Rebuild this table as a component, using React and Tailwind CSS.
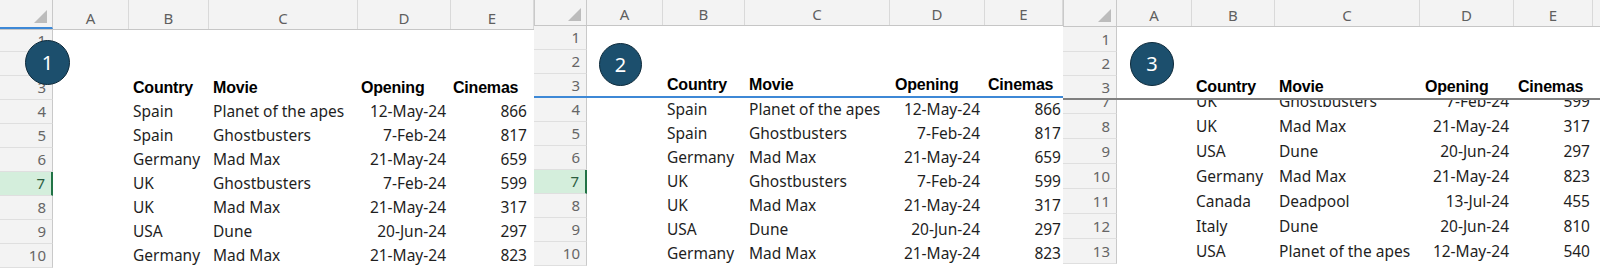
import React from "react";

const DATA_FONT = "font-['Noto_Sans',sans-serif]";
const HEAD_FONT = "font-['Liberation_Sans',Arial,sans-serif]";

const rowsMain = [
  ["Spain", "Planet of the apes", "12-May-24", "866"],
  ["Spain", "Ghostbusters", "7-Feb-24", "817"],
  ["Germany", "Mad Max", "21-May-24", "659"],
  ["UK", "Ghostbusters", "7-Feb-24", "599"],
  ["UK", "Mad Max", "21-May-24", "317"],
  ["USA", "Dune", "20-Jun-24", "297"],
  ["Germany", "Mad Max", "21-May-24", "823"],
];

const rowsScrolled = [
  ["UK", "Ghostbusters", "7-Feb-24", "599"],
  ["UK", "Mad Max", "21-May-24", "317"],
  ["USA", "Dune", "20-Jun-24", "297"],
  ["Germany", "Mad Max", "21-May-24", "823"],
  ["Canada", "Deadpool", "13-Jul-24", "455"],
  ["Italy", "Dune", "20-Jun-24", "810"],
  ["USA", "Planet of the apes", "12-May-24", "540"],
];

function Corner({ w, h, blue, borderL }) {
  return (
    <div
      className={`${w} ${h} flex items-end justify-end pr-[5px] pb-[4px] bg-[#f3f3f3] border-r border-r-[#c9c9c9] ${
        blue ? "border-b-2 border-b-[#3d88d6]" : ""
      } ${borderL ? "border-l border-l-[#c9c9c9]" : ""}`}
    >
      <svg width="13" height="13" viewBox="0 0 13 13">
        <polygon points="13,0 13,13 0,13" fill="#bcbcbc" />
      </svg>
    </div>
  );
}

function RowHead({ w, label, hl, noBottom }) {
  return (
    <div
      className={`${w} h-full shrink-0 flex items-center justify-end pr-[6px] text-[15px] ${DATA_FONT} ${
        hl
          ? "bg-[#d4eedc] border-r-2 border-r-[#217346] text-[#2b5d3f]"
          : "bg-[#f3f3f3] border-r border-r-[#c9c9c9] text-[#666666]"
      } ${noBottom ? "" : "border-b border-b-[#dfdfdf]"}`}
    >
      {label}
    </div>
  );
}

function Row({ p, h, label, kind, data, hl, extra, noBottom }) {
  const [cw0, cwA, cwB, cwC, cwD, cwE, cwF] = p.cols;
  const isHead = kind === "head";
  const txt = isHead
    ? `${HEAD_FONT} font-bold text-[16px] tracking-[-0.2px] text-black`
    : `${DATA_FONT} text-[15.5px] text-[#1f1f1f]`;
  return (
    <div className={`flex ${h} ${extra || ""}`}>
      <RowHead w={cw0} label={label} hl={hl} noBottom={noBottom} />
      <div className={`${cwA} shrink-0`} />
      <div className={`${cwB} shrink-0 flex items-center ${p.pb} whitespace-nowrap ${txt}`}>
        {isHead ? "Country" : data ? data[0] : ""}
      </div>
      <div className={`${cwC} shrink-0 flex items-center ${p.pc} whitespace-nowrap ${txt}`}>
        {isHead ? "Movie" : data ? data[1] : ""}
      </div>
      <div
        className={`${cwD} shrink-0 flex items-center whitespace-nowrap ${txt} ${
          isHead ? `justify-start ${p.pdh}` : `justify-end ${p.pd}`
        }`}
      >
        {isHead ? "Opening" : data ? data[2] : ""}
      </div>
      <div
        className={`${cwE} shrink-0 flex items-center whitespace-nowrap ${txt} ${
          isHead ? `justify-start ${p.peh}` : `justify-end ${p.pe}`
        }`}
      >
        {isHead ? "Cinemas" : data ? data[3] : ""}
      </div>
      {cwF ? <div className={`${cwF} shrink-0`} /> : null}
    </div>
  );
}

function HeaderRow({ p, h, blueCorner, borderL }) {
  const letters = ["A", "B", "C", "D", "E", ""];
  const cols = p.cols.slice(1);
  return (
    <div className={`flex ${h} bg-[#f3f3f3] border-b border-b-[#c6c6c6] shrink-0`}>
      <Corner w={p.cols[0]} h="h-full" blue={blueCorner} borderL={borderL} />
      {cols.map((c, i) => (
        <div
          key={i}
          className={`${c} shrink-0 flex items-end justify-center pb-[1px] leading-[20px] text-[15px] text-[#5f5f5f] ${DATA_FONT} ${
            i < 5 ? "border-r border-r-[#d9d9d9]" : ""
          }`}
        >
          {letters[i]}
        </div>
      ))}
    </div>
  );
}

function Badge({ n, pos }) {
  return (
    <div
      className={`absolute ${pos} rounded-full bg-[#1c4f6d] border-[1.5px] border-[#0d2a3b] flex items-center justify-center text-white text-[20px] ${DATA_FONT}`}
    >
      {n}
    </div>
  );
}

const P1 = {
  cols: ["w-[53px]", "w-[76px]", "w-[80px]", "w-[149px]", "w-[93px]", "w-[83px]"],
  pb: "pl-[4px]",
  pc: "pl-[4px]",
  pdh: "pl-[3px]",
  pd: "pr-[5px]",
  peh: "pl-[2px]",
  pe: "pr-[7px]",
};
const P2 = {
  cols: ["w-[53px]", "w-[76px]", "w-[82px]", "w-[145px]", "w-[95px]", "w-[78px]"],
  pb: "pl-[4px]",
  pc: "pl-[4px]",
  pdh: "pl-[5px]",
  pd: "pr-[5px]",
  peh: "pl-[3px]",
  pe: "pr-[2px]",
};
const P3 = {
  cols: ["w-[54px]", "w-[75px]", "w-[83px]", "w-[145px]", "w-[94px]", "w-[79px]", "w-[7px]"],
  pb: "pl-[4px]",
  pc: "pl-[4px]",
  pdh: "pl-[5px]",
  pd: "pr-[5px]",
  peh: "pl-[4px]",
  pe: "pr-[3px]",
};

function Panel1() {
  return (
    <div className="relative w-[534px] h-full shrink-0 flex flex-col overflow-hidden bg-white">
      <HeaderRow p={P1} h="h-[30px]" blueCorner />
      <Row p={P1} h="h-[22px]" label="1" />
      <Row p={P1} h="h-[24px]" label="2" />
      <Row p={P1} h="h-[24px]" label="3" kind="head" />
      {rowsMain.map((r, i) => (
        <Row key={i} p={P1} h="h-[24px]" label={String(i + 4)} data={r} hl={i === 3} />
      ))}
      <Badge n="1" pos="left-[25px] top-[40px] w-[45px] h-[45px]" />
    </div>
  );
}

function Panel2() {
  return (
    <div className="relative w-[529px] h-full shrink-0 flex flex-col overflow-hidden bg-white">
      <HeaderRow p={P2} h="h-[26px]" borderL />
      <Row p={P2} h="h-[24px]" label="1" />
      <Row p={P2} h="h-[24px]" label="2" />
      <Row
        p={P2}
        h="h-[24px]"
        label="3"
        kind="head"
        noBottom
        extra="border-b-2 border-b-[#3d88d6]"
      />
      {rowsMain.map((r, i) => (
        <Row key={i} p={P2} h="h-[24px]" label={String(i + 4)} data={r} hl={i === 3} />
      ))}
      <Badge n="2" pos="left-[65px] top-[43px] w-[43px] h-[43px]" />
    </div>
  );
}

function Panel3() {
  return (
    <div className="relative w-[537px] h-full shrink-0 flex flex-col overflow-hidden bg-white">
      <HeaderRow p={P3} h="h-[27px]" borderL />
      <Row p={P3} h="h-[25px]" label="1" />
      <Row p={P3} h="h-[24px]" label="2" />
      <Row p={P3} h="h-[22px]" label="3" kind="head" noBottom />
      <div className="h-[2px] bg-[#7f7f7f] shrink-0" />
      <div className="h-[164px] overflow-hidden shrink-0">
        <div className="-mt-[11px]">
          {rowsScrolled.map((r, i) => (
            <Row key={i} p={P3} h="h-[25px]" label={String(i + 7)} data={r} />
          ))}
        </div>
      </div>
      <Badge n="3" pos="left-[67px] top-[42px] w-[44px] h-[44px]" />
    </div>
  );
}

export default function App() {
  return (
    <div className="w-[1600px] h-[269px] flex overflow-hidden bg-white">
      <Panel1 />
      <Panel2 />
      <Panel3 />
    </div>
  );
}
